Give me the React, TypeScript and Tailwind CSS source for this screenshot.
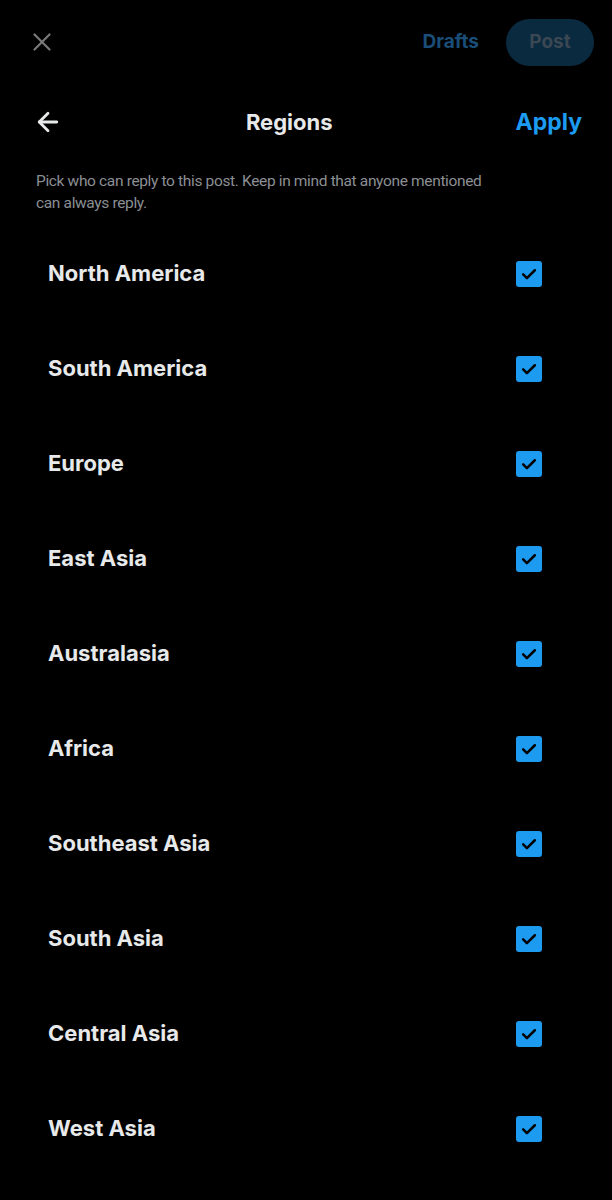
import { ArrowLeft, X } from "lucide-react";

const regions = [
  "North America",
  "South America",
  "Europe",
  "East Asia",
  "Australasia",
  "Africa",
  "Southeast Asia",
  "South Asia",
  "Central Asia",
  "West Asia",
];

function CheckBox() {
  return (
    <div className="w-[26px] h-[26px] rounded-[3px] bg-[#1d9bf0] flex items-center justify-center">
      <svg viewBox="0 0 24 24" className="w-[20px] h-[20px]" fill="none" stroke="#000" strokeWidth={3} strokeLinecap="round" strokeLinejoin="round">
        <path d="M5 12.5l4.5 4.5L19 7.5" />
      </svg>
    </div>
  );
}

export default function App() {
  return (
    <main className="w-[612px] h-[1200px] bg-black text-[#e7e9ea] font-['Inter',sans-serif] overflow-hidden">
      <header className="h-[84px] flex items-center justify-between pl-[27px] pr-[18px]">
        <X className="w-[30px] h-[30px] text-[#7a7a7a]" strokeWidth={1.75} />
        <div className="flex items-center gap-[27px]">
          <span className="text-[19px] font-bold text-[#1a4e78]">Drafts</span>
          <span className="w-[88px] h-[47px] rounded-full bg-[#0a2a40] flex items-center justify-center text-[19px] font-bold text-[#3b4752]">
            Post
          </span>
        </div>
      </header>

      <div className="h-[76px] flex items-center justify-between pl-[33px] pr-[30px]">
        <ArrowLeft className="w-[30px] h-[30px] text-[#e7e9ea]" strokeWidth={2.25} />
        <h1 className="text-[22px] font-bold">Regions</h1>
        <span className="text-[23px] font-bold text-[#1d9bf0]">Apply</span>
      </div>

      <p className="pl-[36px] w-[500px] mt-[10px] text-[15.5px] tracking-[-0.35px] leading-[22px] text-[#8b8f94] font-['Roboto',sans-serif]">
        Pick who can reply to this post. Keep in mind that anyone mentioned can always reply.
      </p>

      <ul className="mt-[12px]">
        {regions.map((r) => (
          <li key={r} className="h-[95px] flex items-center justify-between pl-[48px] pr-[70px]">
            <span className="text-[22px] font-bold">{r}</span>
            <CheckBox />
          </li>
        ))}
      </ul>
    </main>
  );
}
